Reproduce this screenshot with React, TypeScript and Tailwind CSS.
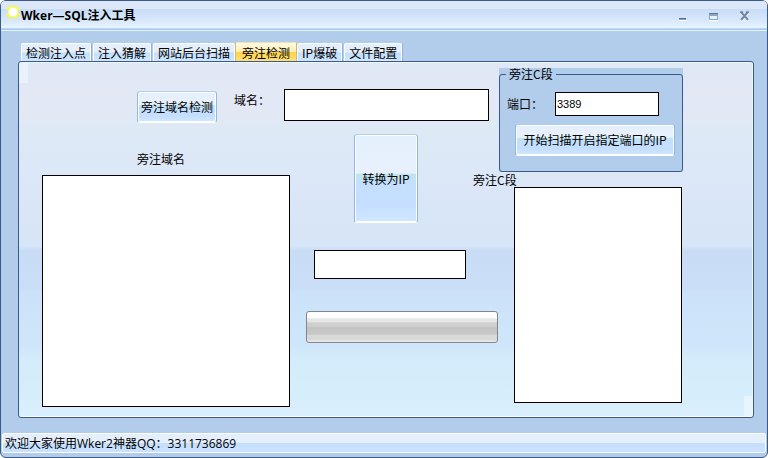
import React from "react";

const tabs = ["检测注入点", "注入猜解", "网站后台扫描", "旁注检测", "IP爆破", "文件配置"];

const buttonStyle =
  "rounded-[3px] border border-x-[#8fb8dc] border-t-[#b4cfe8] border-b-white bg-[linear-gradient(#e4f0fd,#e9f0fd_44%,#bfe3ef_45%,#bfe3ef_51%,#c3dfff_53%,#c5deff_80%,#d0e8ff)] shadow-[inset_0_0_0_1px_white] whitespace-nowrap";

function SunIcon() {
  return (
    <svg width="14" height="14" viewBox="0 0 14 14" aria-hidden="true">
      <path
        d="M4 0l1 3M10 0L9 3M4 14l1-3M10 14l-1-3M0 4l3 1M0 10l3-1M14 4l-3 1M14 10l-3-1M2 2l2 2M12 2l-2 2M2 12l2-2M12 12l-2-2"
        stroke="#ffff20"
        strokeWidth="1.3"
      />
      <circle cx="7" cy="7" r="4.8" fill="#fff" stroke="#ffff20" strokeWidth="0.8" />
    </svg>
  );
}

function TitleBar() {
  return (
    <header className="flex h-[30px] items-center rounded-t-[4px] border-b border-[#e4f2fc] bg-[linear-gradient(#dce8fa,#dce8fa_26%,#c8dcf6_28%,#d4e6fb_60%,#e6f2fe_92%,#a9cbf2_96%)] pr-[17px] pl-[5px]">
      <div className="mt-1 self-start">
        <SunIcon />
      </div>
      <h1 className="ml-px font-['Open_Sans','Noto_Sans_CJK_SC',sans-serif] text-[12px] leading-4 font-bold">
        Wker—SQL注入工具
      </h1>
      <div className="mt-px ml-auto flex gap-5">
        <button aria-label="最小化" className="h-3 w-[11px]">
          <svg width="11" height="12" viewBox="0 0 11 12">
            <path d="M2 10h7v1H2z" fill="#fff" />
            <path d="M2 8h7v1H2z" fill="#5f6f86" />
            <path d="M2 9h7v1H2z" fill="#86a0c4" />
          </svg>
        </button>
        <button aria-label="最大化" className="h-3 w-[11px]">
          <svg width="11" height="12" viewBox="0 0 11 12">
            <path d="M1 10h9v1H1z" fill="#fff" />
            <path d="M1 3h9v7H1z" fill="#8aa5cb" />
            <path d="M1 3h9v1H1z" fill="#68727f" />
            <path d="M2 6h7v3H2z" fill="#e8f2fd" />
          </svg>
        </button>
        <button aria-label="关闭" className="h-3 w-[11px]">
          <svg width="11" height="12" viewBox="0 0 11 12">
            <path d="M2 3l7 8M9 3l-7 8" stroke="#fff" strokeWidth="2" />
            <path d="M2 2l7 8M9 2l-7 8" stroke="#7589a5" strokeWidth="2" />
            <path d="M1 2h3M7 2h3" stroke="#666d77" />
          </svg>
        </button>
      </div>
    </header>
  );
}

function TabBar({ active, onSelect }: any) {
  return (
    <nav className="flex items-end pl-[3px]">
      {tabs.map((tab: string) =>
        tab === active ? (
          <button
            key={tab}
            onClick={() => onSelect(tab)}
            className="-mb-px -ml-[2px] h-5 rounded-t-[2px] border-x border-t border-x-[#d3b673] border-t-[#f3e3ae] bg-[linear-gradient(#fffbe8,#ffedae_45%,#ffd54c_50%,#ffe27c)] px-[6px] whitespace-nowrap"
          >
            {tab}
          </button>
        ) : (
          <button
            key={tab}
            onClick={() => onSelect(tab)}
            className="mr-[2px] h-[18px] rounded-t-[2px] border-x border-t border-white bg-[linear-gradient(#e4effc,#e6effc_48%,#c4dffd_52%,#cfe6ff)] px-1 whitespace-nowrap shadow-[1px_0_#8fb4d6]"
          >
            {tab}
          </button>
        )
      )}
    </nav>
  );
}

function App() {
  const [active, setActive] = React.useState("旁注检测");
  const [port, setPort] = React.useState("3389");

  return (
    <div className="flex min-h-screen flex-col rounded-[6px] border border-[#3b5a87] bg-[#b2cceb] font-['Noto_Sans_CJK_SC',sans-serif] text-[12px] leading-4 text-black">
      <TitleBar />

      <main className="flex grow flex-col pt-[11px] pr-[13px] pb-[15px] pl-[17px]">
        <TabBar active={active} onSelect={setActive} />

        <section className="flex grow rounded-[3px] border border-[#3b5a87] bg-[linear-gradient(#e9f1fa,#e9f1fa),linear-gradient(#e6f5fe,#e6f5fe),linear-gradient(#dfe8f5,#e3e8f5_10%,#e1e9f5_16%,#dde9f5_20%,#dce7f8_32%,#d6e5f7_52%,#c9dcf6_53%,#cbdef7_64%,#cce2f9_65%,#cfe6fa_80%,#d3ebfa_83%,#d9effd)] bg-[position:0_0,100%_100%,0_0] bg-[size:9px_21px,9px_21px,100%_100%] bg-no-repeat pr-[70px] pl-[23px] shadow-[inset_0_1px_#f0f6fd,inset_0_-1px_white,inset_-1px_0_#f0f8fe]">
          <div className="min-w-0 flex-1 pt-[27px]">
            <div className="flex items-start pr-[9px] pl-[95px]">
              <button className={`${buttonStyle} mt-[2px] h-8 w-20`}>旁注域名检测</button>
              <label htmlFor="domain" className="mt-[3px] ml-[17px] w-[50px] whitespace-nowrap">
                域名：
              </label>
              <input id="domain" className="h-8 min-w-0 flex-1 border border-black bg-white px-1" />
            </div>

            <div className="mt-[11px] flex gap-4">
              <div className="min-w-0 flex-1 pt-[17px]">
                <label htmlFor="sites" className="block pl-[95px]">
                  旁注域名
                </label>
                <textarea
                  id="sites"
                  className="mt-2 block h-[232px] w-full resize-none border border-black bg-white p-1"
                />
              </div>

              <div className="w-48">
                <button className={`${buttonStyle} ml-12 block h-[89px] w-16`}>转换为IP</button>
                <input
                  aria-label="IP"
                  className="mt-[27px] ml-2 block h-[29px] w-[152px] border border-black bg-white px-1"
                />
                <div
                  role="progressbar"
                  aria-label="进度"
                  aria-valuenow={0}
                  className="mt-8 h-8 rounded-[3px] border border-[#858585] bg-[linear-gradient(#fff_20%,#e8e8e8_22%,#e6e6e6_33%,#d0d0d0_36%,#cdcdcd_49%,#c3c3c3_52%,#c8c8c8_74%,#d8d8d8_78%,#d9d9d9_92%,#eee)]"
                />
              </div>
            </div>
          </div>

          <div className="ml-px w-[184px] pt-[6px]">
            <div className="bg-[#b2cceb]">
              <fieldset className="h-[104px] rounded-[3px] border border-[#3b5a87] px-[7px]">
                <legend className="-ml-px px-[3px] leading-3">旁注C段</legend>
                <div className="mt-3 flex items-center">
                  <label htmlFor="port" className="w-12 whitespace-nowrap">
                    端口：
                  </label>
                  <input
                    id="port"
                    value={port}
                    onChange={(e) => setPort(e.target.value)}
                    className="h-6 w-[104px] border border-black bg-white px-px font-['Liberation_Sans',sans-serif] text-[11px]"
                  />
                </div>
                <button className={`${buttonStyle} mt-2 ml-2 h-8 w-40`}>
                  开始扫描开启指定端口的IP
                </button>
              </fieldset>
            </div>
            <label htmlFor="segment" className="-ml-[26px] block leading-[15px]">
              旁注C段
            </label>
            <textarea
              id="segment"
              className="ml-[15px] block h-[216px] w-[168px] resize-none border border-black bg-white p-1"
            />
          </div>
        </section>
      </main>

      <footer className="mx-px mb-1 h-5 rounded-[2px] border border-white bg-[linear-gradient(#e4effc,#e6effc_48%,#c4dffd_52%,#c8e1ff)] px-[2px] font-['Open_Sans','Noto_Sans_CJK_SC',sans-serif] leading-5">
        欢迎大家使用Wker2神器QQ：3311736869
      </footer>
    </div>
  );
}

export default App;
